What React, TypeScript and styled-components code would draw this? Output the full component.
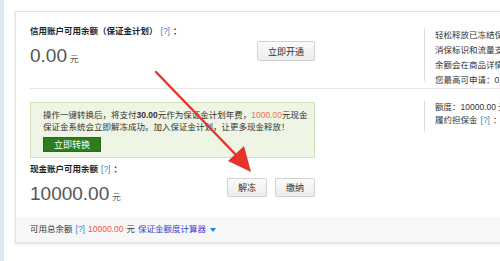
import React from 'react';
import styled, { createGlobalStyle } from 'styled-components';

const GlobalStyle = createGlobalStyle`
  html, body {
    margin: 0;
    padding: 0;
    background: #fff;
    overflow: hidden;
  }
  body {
    font-family: "Liberation Sans", "Noto Sans CJK SC", sans-serif;
    font-size: 8.5px;
    color: #333;
  }
`;

const Page = styled.div`
  position: relative;
  width: 500px;
  height: 261px;
  box-sizing: border-box;
  border-left: 4px solid #dfe7ef;
  padding: 11px 0 0 11px;
  overflow: hidden;
`;

const Card = styled.div`
  width: 620px;
  border: 1px solid #e2e2e2;
  box-shadow: 0 1px 3px rgba(0, 0, 0, 0.12);
  background: #fff;
`;

const Section = styled.div<{ $divider?: boolean; $top: number; $bottom: number }>`
  display: flex;
  align-items: flex-start;
  margin-left: 14px;
  padding-top: ${({ $top }) => $top}px;
  padding-bottom: ${({ $bottom }) => $bottom}px;
  border-bottom: ${({ $divider }) => ($divider ? '1px solid #e6e6e6' : 'none')};
`;

const Main = styled.div`
  width: 285px;
  flex: none;
`;

const Title = styled.div<{ $gap?: number }>`
  margin-top: ${({ $gap }) => $gap || 0}px;
  font-weight: bold;
  line-height: 14px;
  color: #222;
`;

const Help = styled.span`
  font-weight: normal;
  color: #4383d0;
  margin: 0 3px;
`;

const AmountRow = styled.div<{ $gap: number }>`
  display: flex;
  justify-content: space-between;
  align-items: flex-start;
  margin-top: ${({ $gap }) => $gap}px;
`;

const Amount = styled.div<{ $offset: number }>`
  margin-top: ${({ $offset }) => $offset}px;
  font-size: 19px;
  line-height: 22px;
  color: #555;
  white-space: nowrap;
`;

const Unit = styled.span`
  font-size: 8.5px;
  margin-left: 3px;
`;

const Buttons = styled.div`
  display: flex;
  gap: 8px;
`;

const GrayButton = styled.button<{ $w: number; $h: number }>`
  width: ${({ $w }) => $w}px;
  height: ${({ $h }) => $h}px;
  padding: 0;
  border: 1px solid #d2d2d2;
  border-radius: 2px;
  background: linear-gradient(#fbfbfb, #ececec);
  font-family: inherit;
  font-size: 9px;
  color: #333;
`;

const Side = styled.div<{ $top: number; $lh: number; $h: number }>`
  flex: none;
  margin-left: 109px;
  margin-top: ${({ $top }) => $top}px;
  height: ${({ $h }) => $h}px;
  border-left: 1px solid #dcdcdc;
  padding-left: 10px;
  line-height: ${({ $lh }) => $lh}px;
  white-space: nowrap;
  color: #333;
`;

const GreenBox = styled.div`
  margin-top: 13px;
  height: 56px;
  box-sizing: border-box;
  border: 1px solid #cfe2b8;
  background: #eef5e5;
  padding: 6px 12px 0;
  line-height: 12px;
  white-space: nowrap;
`;

const Orange = styled.span`
  color: #f5724f;
`;

const GreenButton = styled.button`
  display: block;
  margin-top: 4px;
  width: 58px;
  height: 15px;
  padding: 0;
  border: 1px solid #256f17;
  background: #2d7d1f;
  color: #fff;
  font-family: inherit;
  font-size: 9px;
`;

const Footer = styled.div`
  height: 25px;
  line-height: 25px;
  background: #f7f7f7;
  padding-left: 14px;
  white-space: nowrap;
  color: #333;
`;

const Red = styled.span`
  color: #f4553f;
  margin-right: 3px;
`;

const Calc = styled.span`
  color: #3b3fcf;
  margin-left: 3px;
`;

const Caret = styled.span`
  display: inline-block;
  margin-left: 4px;
  border-left: 3.5px solid transparent;
  border-right: 3.5px solid transparent;
  border-top: 4px solid #1a86d6;
  vertical-align: middle;
`;

const Arrow = styled.svg`
  position: absolute;
  left: 0;
  top: 0;
  pointer-events: none;
`;

export default function App() {
  return (
    <>
      <GlobalStyle />
      <Page>
        <Card>
          <Section $divider $top={12} $bottom={0} style={{ height: 64 }}>
            <Main>
              <Title>
                信用账户可用余额（保证金计划）<Help>[?]</Help>：
              </Title>
              <AmountRow $gap={3}>
                <Amount $offset={4}>
                  0.00<Unit>元</Unit>
                </Amount>
                <GrayButton $w={58} $h={20}>立即开通</GrayButton>
              </AmountRow>
            </Main>
            <Side $top={4} $lh={15} $h={53}>
              轻松释放已冻结保证金，享受
              <br />
              消保标识和流量支持，可用
              <br />
              余额会在商品详情页展示。
              <br />
              您最高可申请：0.00 元
            </Side>
          </Section>
          <Section $top={0} $bottom={9}>
            <Main>
              <GreenBox>
                操作一键转换后，将支付<b>30.00</b>元作为保证金计划年费，<Orange>1000.00</Orange>元现金
                <br />
                保证金系统会立即解冻成功。加入保证金计划，让更多现金释放！
                <GreenButton>立即转换</GreenButton>
              </GreenBox>
              <Title $gap={4}>
                现金账户可用余额<Help>[?]</Help>：
              </Title>
              <AmountRow $gap={2}>
                <Amount $offset={5}>
                  10000.00<Unit>元</Unit>
                </Amount>
                <Buttons>
                  <GrayButton $w={40} $h={19}>解冻</GrayButton>
                  <GrayButton $w={40} $h={19}>缴纳</GrayButton>
                </Buttons>
              </AmountRow>
            </Main>
            <Side $top={12} $lh={13} $h={31}>
              额度：10000.00 元
              <br />
              履约担保金<Help>[?]</Help>：0.00 元
            </Side>
          </Section>
          <Footer>
            可用总余额<Help>[?]</Help>
            <Red>10000.00</Red>元<Calc>保证金额度计算器</Calc>
            <Caret />
          </Footer>
        </Card>
        <Arrow width="500" height="261" viewBox="0 0 500 261">
          <line x1="152" y1="72" x2="234" y2="157" stroke="#e9312b" strokeWidth="2.4" strokeLinecap="round" />
          <polygon points="247,172 224,161 240,146" fill="#e9312b" />
        </Arrow>
      </Page>
    </>
  );
}
